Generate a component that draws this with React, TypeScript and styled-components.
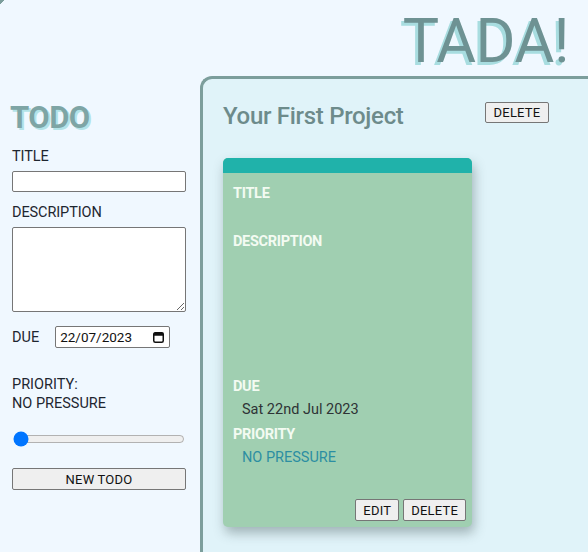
import React from "react";
import styled, { createGlobalStyle } from "styled-components";

const Global = createGlobalStyle`
  html, body { margin: 0; padding: 0; }
  body {
    background: #f0f8ff;
    font-family: Roboto, "Liberation Sans", sans-serif;
    color: #222;
  }
`;

const Page = styled.div`
  width: 588px;
  height: 552px;
  overflow: hidden;
  display: flex;
  flex-direction: column;
  background: linear-gradient(135deg, #7c9e9c 0 3px, #f0f8ff 3px);
`;

const Header = styled.header`
  height: 76px;
  display: flex;
  justify-content: flex-end;
  align-items: flex-start;
  padding-right: 19px;
  box-sizing: border-box;
`;

const Brand = styled.h1`
  margin: 0;
  margin-top: 6px;
  font-size: 61px;
  font-weight: 400;
  line-height: 70px;
  color: #6e9293;
  text-shadow: -3px 3px 0 #a8dde0;
  letter-spacing: -0.5px;
`;

const Body = styled.div`
  flex: 1;
  display: flex;
  min-height: 0;
`;

const Sidebar = styled.aside`
  width: 200px;
  flex: none;
  box-sizing: border-box;
  padding-left: 12px;
  display: flex;
  flex-direction: column;
  align-items: flex-start;
`;

const SideTitle = styled.h2`
  margin: 24px 0 11px -2px;
  font-size: 31px;
  line-height: 36px;
  font-weight: 700;
  color: #7ea5a5;
  text-shadow: 2px 2px 0 #b3e3e8;
  letter-spacing: -0.5px;
`;

const Label = styled.label`
  display: block;
  font-size: 14.5px;
  line-height: 19px;
  color: #1e2630;
  margin-bottom: 5px;
  letter-spacing: -0.1px;
`;

const TextInput = styled.input`
  box-sizing: border-box;
  width: 174px;
  height: 21px;
  border: 1px solid #767676;
  border-radius: 2px;
  background: #fff;
  margin: 0 0 11px 0;
  padding: 1px 2px;
`;

const TextArea = styled.textarea`
  box-sizing: border-box;
  width: 174px;
  height: 85px;
  border: 1px solid #767676;
  border-radius: 2px;
  background: #fff;
  margin: 0 0 14px 0;
  padding: 2px;
  display: block;
`;

const DueRow = styled.div`
  display: flex;
  align-items: center;
  gap: 16px;
  margin-bottom: 27px;
`;

const DueLabel = styled.span`
  font-size: 14.5px;
  color: #1e2630;
`;

const DateField = styled.div`
  box-sizing: border-box;
  width: 115px;
  height: 22px;
  border: 1px solid #767676;
  border-radius: 2px;
  background: #fff;
  display: flex;
  align-items: center;
  justify-content: space-between;
  padding: 0 5px 0 4px;
  font-size: 13.5px;
  color: #111;
`;

const PriorityText = styled.div`
  font-size: 14.5px;
  line-height: 19px;
  color: #1e2630;
  margin-bottom: 18px;
`;

const Range = styled.input`
  width: 172px;
  margin: 0 0 21px 1px;
`;

const Button = styled.button<{ $wide?: boolean }>`
  box-sizing: border-box;
  height: 22px;
  width: ${(p) => (p.$wide ? "174px" : "auto")};
  padding: 0 7px;
  border: 1px solid #767676;
  border-radius: 2px;
  background: #efefef;
  font-family: Roboto, "Liberation Sans", sans-serif;
  font-size: 13px;
  color: #111;
  letter-spacing: 0.2px;
`;

const Main = styled.main`
  flex: 1;
  box-sizing: border-box;
  border-top: 3px solid #7c9e9c;
  border-left: 3px solid #7c9e9c;
  border-top-left-radius: 12px;
  background: #e0f3f9;
  padding: 22px 0 0 20px;
`;

const ProjectHeader = styled.div`
  width: 326px;
  display: flex;
  justify-content: space-between;
  align-items: flex-start;
  margin-bottom: 27px;
`;

const ProjectTitle = styled.h3`
  margin: 0;
  font-size: 24px;
  line-height: 30px;
  font-weight: 500;
  color: #6d8b8b;
  letter-spacing: -0.3px;
`;

const HeaderButton = styled(Button)`
  margin-top: 1px;
  height: 21px;
  width: 64px;
`;

const Card = styled.article`
  width: 249px;
  height: 369px;
  border-radius: 5px;
  overflow: hidden;
  background: #a0cfb1;
  box-shadow: 2px 6px 12px rgba(40, 60, 60, 0.35);
  display: flex;
  flex-direction: column;
`;

const CardBar = styled.div`
  height: 15px;
  background: #20b2aa;
  flex: none;
`;

const CardBody = styled.div`
  flex: 1;
  display: flex;
  flex-direction: column;
  padding: 12px 6px 6px 10px;
`;

const CardLabel = styled.div`
  font-size: 14.5px;
  line-height: 18px;
  font-weight: 700;
  color: #f3fbf2;
  letter-spacing: -0.3px;
`;

const CardValue = styled.div<{ $tone?: string; $space: number }>`
  font-size: 14.5px;
  line-height: 18px;
  padding-left: 9px;
  color: ${(p) => p.$tone || "#2e3336"};
  min-height: 18px;
  margin-top: 5px;
  margin-bottom: ${(p) => p.$space}px;
`;

const CardActions = styled.div`
  margin-top: auto;
  display: flex;
  justify-content: flex-end;
  gap: 4px;
`;

const CalendarIcon = () => (
  <svg width="11" height="12" viewBox="0 0 11 12">
    <rect x="0.75" y="1.75" width="9.5" height="9.5" rx="1.5" fill="none" stroke="#111" strokeWidth="1.5" />
    <rect x="0.75" y="1.75" width="9.5" height="3" fill="#111" />
  </svg>
);

export default function App() {
  return (
    <>
      <Global />
      <Page>
        <Header>
          <Brand>TADA!</Brand>
        </Header>
        <Body>
          <Sidebar>
            <SideTitle>TODO</SideTitle>
            <Label>TITLE</Label>
            <TextInput type="text" />
            <Label>DESCRIPTION</Label>
            <TextArea />
            <DueRow>
              <DueLabel>DUE</DueLabel>
              <DateField>
                <span>22/07/2023</span>
                <CalendarIcon />
              </DateField>
            </DueRow>
            <PriorityText>
              PRIORITY:
              <br />
              NO PRESSURE
            </PriorityText>
            <Range type="range" min={0} max={3} defaultValue={0} />
            <Button $wide>NEW TODO</Button>
          </Sidebar>
          <Main>
            <ProjectHeader>
              <ProjectTitle>Your First Project</ProjectTitle>
              <HeaderButton>DELETE</HeaderButton>
            </ProjectHeader>
            <Card>
              <CardBar />
              <CardBody>
                <CardLabel>TITLE</CardLabel>
                <CardValue $space={7}></CardValue>
                <CardLabel>DESCRIPTION</CardLabel>
                <CardValue $space={104}></CardValue>
                <CardLabel>DUE</CardLabel>
                <CardValue $space={7}>Sat 22nd Jul 2023</CardValue>
                <CardLabel>PRIORITY</CardLabel>
                <CardValue $space={0} $tone="#2c8ea2">NO PRESSURE</CardValue>
                <CardActions>
                  <Button>EDIT</Button>
                  <Button>DELETE</Button>
                </CardActions>
              </CardBody>
            </Card>
          </Main>
        </Body>
      </Page>
    </>
  );
}
